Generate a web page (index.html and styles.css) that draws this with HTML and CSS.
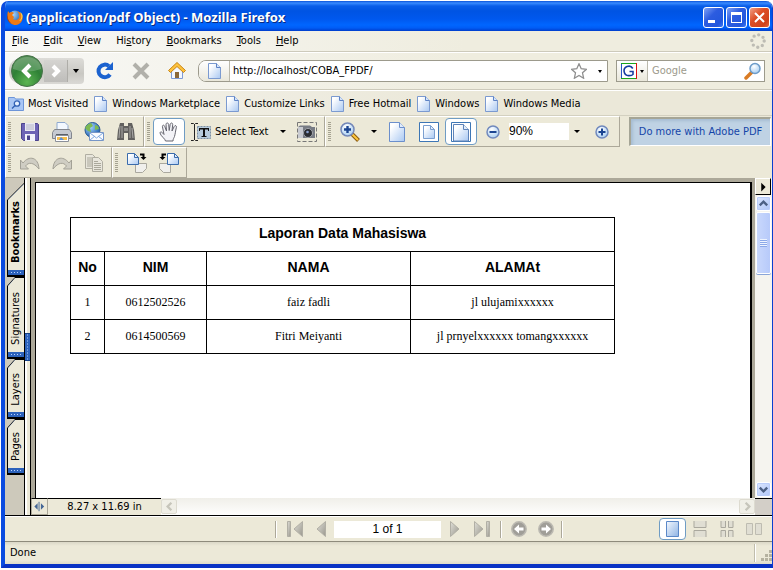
FILE: index.html
```html
<!DOCTYPE html>
<html lang="en">
<head>
<meta charset="utf-8">
<title>(application/pdf Object) - Mozilla Firefox</title>
<link rel="stylesheet" href="styles.css">
</head>
<body>
<svg class="defs" aria-hidden="true">
  <defs>
    <linearGradient id="paper" x1="0" y1="0" x2="1" y2="1"><stop offset=".2" stop-color="#fff"/><stop offset="1" stop-color="#a9c8f2"/></linearGradient>
    <linearGradient id="sky" x1="0" y1="0" x2="1" y2="1"><stop offset="0" stop-color="#f4f8fe"/><stop offset="1" stop-color="#8fb4e4"/></linearGradient>
    <linearGradient id="ash" x1="0" y1="0" x2="1" y2="1"><stop offset="0" stop-color="#e0dfd8"/><stop offset="1" stop-color="#99978d"/></linearGradient>
    <radialGradient id="green" cx=".5" cy=".85" r=".8"><stop offset="0" stop-color="#5cb552"/><stop offset=".6" stop-color="#2f8136"/><stop offset="1" stop-color="#4d8b50"/></radialGradient>
    <radialGradient id="globe" cx=".35" cy=".3" r=".8"><stop offset="0" stop-color="#a9d8ff"/><stop offset="1" stop-color="#0b4fa5"/></radialGradient>
    <radialGradient id="lens" cx=".4" cy=".3" r=".8"><stop offset="0" stop-color="#fff"/><stop offset="1" stop-color="#9fc9f0"/></radialGradient>
    <symbol id="page" viewBox="0 0 16 16"><path d="M2.500.5h8l4 4v11h-12z" fill="url(#paper)" stroke="#7b9ad0"/><path d="M10.500.5v4h4" fill="#d5e4fa" stroke="#5d82c4"/></symbol>
    <symbol id="bigpage" viewBox="0 0 20 20"><path d="M2.500.5h10l5 5v14h-15z" fill="url(#paper)" stroke="#6b8fcc"/><path d="M12.500.5v5h5" fill="#e2edfb" stroke="#6b8fcc"/></symbol>
  </defs>
</svg>
<div class="window">
  <header class="titlebar">
    <svg class="i16" viewBox="0 0 16 16"><circle cx="8" cy="8" r="6.500" fill="url(#globe)"/><path d="M1 2l1.500 2C4 2.500 6 3 7 4L5 6l2 2-1 2c2 2 5 1 6-1 1-3-1-6-2-7 4 1 6 4 5.500 8-1 4-4 6-8 6C2 15.500-1 9 1 2z" fill="#ee7a14"/><path d="M13 3c2 3 2 7-1 9 2 0 3-2 3.500-4C16 6 15 4 13 3z" fill="#ffd64a"/><path d="M1 3C0 8 1 12 5 15c-3-1-5-4-5-7z" fill="#a33a10"/></svg>
    <h1>(application/pdf Object) - Mozilla Firefox</h1>
    <button class="cap" aria-label="Minimize"><svg viewBox="0 0 17 17"><path d="M3 11h7v3H3z" fill="#fff"/></svg></button>
    <button class="cap" aria-label="Maximize"><svg viewBox="0 0 17 17"><path d="M3 3h11v11H3zM4 6v7h9V6z" fill="#fff" fill-rule="evenodd"/></svg></button>
    <button class="cap close" aria-label="Close"><svg viewBox="0 0 17 17"><path d="M4 4l9 9M13 4l-9 9" stroke="#fff" stroke-width="2"/></svg></button>
  </header>
  <nav class="menubar">
    <a href="#"><u>F</u>ile</a><a href="#"><u>E</u>dit</a><a href="#"><u>V</u>iew</a><a href="#">Hi<u>s</u>tory</a><a href="#"><u>B</u>ookmarks</a><a href="#"><u>T</u>ools</a><a href="#"><u>H</u>elp</a>
    <svg class="throbber" viewBox="0 0 16 16"><circle cx="8" cy="8" r="6.200" fill="none" stroke="#bdbcb4" stroke-width="3.400" stroke-dasharray="0 4.870" stroke-linecap="round"/></svg>
  </nav>
  <div class="navbar">
    <div class="history">
      <button class="back" aria-label="Back"><svg viewBox="0 0 34 34"><circle cx="17" cy="17" r="15.500" fill="url(#green)" stroke="#47724a"/><path d="M3 15a14 12 0 0128 0q-14 5-28 0" fill="#fff" opacity=".2"/><path d="M20 11l-6 6 6 6" fill="none" stroke="#fff" stroke-width="4"/></svg></button>
      <button class="fwd" aria-label="Forward"><svg viewBox="0 0 24 22"><path d="M9 6l5 5-5 5" fill="none" stroke="#fff" stroke-width="4"/></svg></button>
      <button class="drop" aria-label="Recent pages"><i class="caret"></i></button>
    </div>
    <button class="tool" aria-label="Reload"><svg class="i20" viewBox="0 0 20 20"><path d="M15 13.500A6.300 6.300 0 1114 5.200" fill="none" stroke="#1b62cf" stroke-width="4"/><path d="M18 1v8h-8z" fill="#1b62cf"/></svg></button>
    <button class="tool" aria-label="Stop"><svg class="i20" viewBox="0 0 20 20"><path d="M3 3l14 14M17 3L3 17" stroke="#b1b0aa" stroke-width="4"/></svg></button>
    <button class="tool" aria-label="Home"><svg class="i20" viewBox="0 0 20 20"><path d="M4.500 9v8.500h11V9L10 4z" fill="#f3f7ff" stroke="#7e9bd6"/><path d="M8 11h4v6H8z" fill="#8a6738"/><path d="M10 1.500l8.500 8-2 2L10 5.500l-6.500 6-2-2z" fill="#fdc23c" stroke="#c98515"/></svg></button>
    <div class="url">
      <span class="favicon"><svg class="i16"><use href="#page"/></svg></span>
      <input type="text" aria-label="Location" value="http://localhost/COBA_FPDF/">
      <button class="star" aria-label="Bookmark this page"><svg class="i16" viewBox="0 0 16 16"><path d="M8 .8l2.200 4.900 5.200.6-3.900 3.500 1.100 5.400L8 12.500l-4.600 2.700 1.100-5.400L.6 6.300l5.200-.6z" fill="#fff" stroke="#8f8f8f" stroke-width="1.300"/></svg></button>
      <button class="past" aria-label="Show history"><i class="caret tiny"></i></button>
    </div>
    <div class="search">
      <button class="engine" aria-label="Search engine"><svg class="i16" viewBox="0 0 16 16"><path d="M0 0h16v16H0z" fill="#fff"/><path d="M.5 16V0" stroke="#2855c5"/><path d="M0 .5h16" stroke="#1aa51a"/><path d="M15.500 0v16" stroke="#d11"/><path d="M0 15.500h15" stroke="#1aa51a"/><path d="M11.800 5.500A4.700 4.700 0 108 12.600c2 0 3.600-.6 4-1.200V8.500H8.500" fill="none" stroke="#173da0" stroke-width="1.600"/></svg><i class="caret tiny"></i></button>
      <input type="text" aria-label="Search" placeholder="Google">
      <button aria-label="Search"><svg class="i18" viewBox="0 0 18 18"><path d="M2 16l6-6" stroke="#d97b24" stroke-width="3.500" stroke-linecap="round"/><circle cx="11" cy="6.500" r="5" fill="url(#lens)" stroke="#6d9cc9" stroke-width="1.500"/></svg></button>
    </div>
  </div>
  <nav class="bookmarks">
    <a href="#"><svg class="i16" viewBox="0 0 16 16"><path d="M.5 1.500h6l1 1.500h8v11.500H.5z" fill="#a9c6f5" stroke="#6d95d8"/><circle cx="9" cy="7.500" r="2.700" fill="#e6f0ff" stroke="#3261b5" stroke-width="1.300"/><path d="M7 9.500l-3 3" stroke="#3261b5" stroke-width="1.500"/></svg>Most Visited</a>
    <a href="#"><svg class="i16"><use href="#page"/></svg>Windows Marketplace</a>
    <a href="#"><svg class="i16"><use href="#page"/></svg>Customize Links</a>
    <a href="#"><svg class="i16"><use href="#page"/></svg>Free Hotmail</a>
    <a href="#"><svg class="i16"><use href="#page"/></svg>Windows</a>
    <a href="#"><svg class="i16"><use href="#page"/></svg>Windows Media</a>
  </nav>

  <div class="acrobat">
    <div class="toolrow">
      <div class="group">
        <i class="grip"></i>
        <button class="tool" aria-label="Save"><svg class="i20" viewBox="0 0 20 20"><path d="M1.500 1.500h16l1 1v16h-15l-2-2z" fill="#6d63b5" stroke="#4c448d"/><path d="M5 1h10v8H5z" fill="#e9e9f2"/><path d="M6 3h8M6 5h8M6 7h8" stroke="#b4b4c8"/><path d="M5 12h10v7H5z" fill="#f3f3fb"/><path d="M7 13.500h3V18H7z" fill="#4c448d"/></svg></button>
        <button class="tool" aria-label="Print"><svg class="i20" viewBox="0 0 20 20"><path d="M5 9V.5h8l3 3V9z" fill="#f3f8ff" stroke="#8fa9cf"/><path d="M2.500 7.500h15l2 3v6H.5v-6z" fill="#c6cad1" stroke="#82868e"/><path d="M4 12h12v3H4z" fill="#5b6068"/><path d="M3.500 13.500h13v6h-13z" fill="#fff" stroke="#8b9099"/><path d="M5 15h10v3H5z" fill="#f5be4e"/><path d="M9 15l3 3H7z" fill="#5a90d8"/></svg></button>
        <button class="tool" aria-label="E-mail"><svg class="i20" viewBox="0 0 20 20"><circle cx="8.500" cy="8" r="7.500" fill="url(#globe)" stroke="#2b5b91"/><path d="M3 3l4-2 2 3-3 2 1 4-3-1-3-3zM11 3l3 1 1 3-4 1z" fill="#7dba52"/><path d="M5.500 10.500h14v8h-14z" fill="#fafcff" stroke="#7796c7"/><path d="M6 11l6.500 5L19 11M6 18l5-4M19 18l-5-4" fill="none" stroke="#7fa8df"/></svg></button>
        <button class="tool" aria-label="Search"><svg class="i20" viewBox="0 0 20 20"><path d="M4 1h4v3h4V1h4l2 7 1 10h-7v-7H8v7H1L2 8z" fill="#62615f"/><path d="M4 4L3 16M6 4v12M14 4v12M16 6l1 10" stroke="#aaa9a7"/><path d="M8 6h4v3H8z" fill="#8c8b88"/></svg></button>
      </div>
      <div class="group">
        <i class="grip"></i>
        <button class="tool on" aria-label="Hand tool"><svg class="i20" viewBox="0 0 20 20"><path d="M6.500 19c0-2-5-5-5.500-8 0-1.500 2-1.500 3 .5l1 1L3.500 5c-.5-2 1.500-2.500 2.200-.7L7.500 9 7 2.500c0-2 2.500-2 2.700 0L10.200 8.500 11.200 2.300c.5-2 2.700-1.500 2.500.4L13 9l2.200-4.500c.8-1.700 2.600-.9 2.200.8-1 4-1 6-1.900 9.200-.5 1.500-1.500 2.500-1.500 4.500z" fill="#f3f3f7" stroke="#65656f"/></svg></button>
        <button class="select"><svg viewBox="0 0 20 20"><path d="M0 1.500h2.500l1 1 1-1H7M3.500 2v16M0 18.500h2.500l1-1 1 1H7" fill="none" stroke="#222"/><path d="M6.500 4.500h13v12h-13z" fill="#b7cbdc" stroke="#7b8fa3" stroke-dasharray="2 1"/><path d="M8.500 9V6.500h9V9" fill="none" stroke="#111"/><path d="M8 6h10v1.500H8zM12 6h2v9h-2zM10.500 14h5v1h-5z" fill="#111"/></svg>Select Text</button>
        <button class="arrow" aria-label="Selection tools"><i class="caret small"></i></button>
        <button class="snap" aria-label="Snapshot"><svg class="i20" viewBox="0 0 20 20"><path d="M.5.500h19v19H.5z" fill="none" stroke="#777" stroke-dasharray="4 2"/><path d="M1 5l2-1.500h10L15 5h3v11H1z" fill="#777b84"/><path d="M1 5h5v11H1z" fill="#c8cad0"/><circle cx="11" cy="11" r="4.500" fill="#2b2d33" stroke="#a4a7ae"/><circle cx="10.500" cy="10" r="1.300" fill="#8ca2d0"/></svg></button>
      </div>
      <div class="group">
        <i class="grip"></i>
        <button class="tool" aria-label="Zoom in tool"><svg class="i20" viewBox="0 0 20 20"><path d="M12 12l6.500 6.500" stroke="#8b5b10" stroke-width="4"/><path d="M12 12l6 6" stroke="#ffc83d" stroke-width="2"/><circle cx="7.500" cy="7.500" r="6.500" fill="url(#lens)" stroke="#7488b8" stroke-width="1.500"/><path d="M7.500 4v7M4 7.500h7" stroke="#1b4592" stroke-width="2.400"/></svg></button>
        <button class="arrow zoomarrow" aria-label="Zoom tools"><i class="caret small"></i></button>
        <button class="tool" aria-label="Actual size"><svg class="i20"><use href="#bigpage"/></svg></button>
        <button class="tool" aria-label="Fit page"><svg class="i20" viewBox="0 0 20 20"><path d="M.5.500h19v19H.5z" fill="#fff" stroke="#3d76b5"/><path d="M4.500 3.500h7l4 4v9h-11z" fill="url(#paper)" stroke="#7b9fd0"/><path d="M11.500 3.500v4h4" fill="none" stroke="#7b9fd0"/></svg></button>
        <button class="tool on" aria-label="Fit width"><svg class="i20" viewBox="0 0 20 20"><path d="M.5.500h19v19H.5z" fill="#fff" stroke="#3d76b5"/><path d="M2.500 19V2.500h10l5 5V19z" fill="url(#paper)" stroke="#5e83b9"/><path d="M12.500 2.500v5h5" fill="#e2edfb" stroke="#5e83b9"/></svg></button>
        <button class="tool" aria-label="Zoom out"><svg class="i14" viewBox="0 0 14 14"><circle cx="7" cy="7" r="6" fill="url(#lens)" stroke="#7189bd" stroke-width="1.500"/><path d="M3.500 7h7" stroke="#1b4592" stroke-width="2"/></svg></button>
        <select aria-label="Zoom"><option>90%</option></select>
        <i class="caret small zc"></i>
        <button class="tool" aria-label="Zoom in"><svg class="i14" viewBox="0 0 14 14"><circle cx="7" cy="7" r="6" fill="url(#lens)" stroke="#7189bd" stroke-width="1.500"/><path d="M3.500 7h7M7 3.500v7" stroke="#1b4592" stroke-width="2"/></svg></button>
      </div>
      <a class="promo" href="#">Do more with Adobe PDF</a>
    </div>
    <div class="toolrow">
      <div class="group">
        <i class="grip"></i>
        <button class="tool" aria-label="Undo"><svg class="i20" viewBox="0 0 20 20"><path d="M.5 7v9h8l-3-3c3-4 8-4 13.500 3C18.500 4 9 2 3 10z" fill="#cfcdc3" stroke="#a3a196"/></svg></button>
        <button class="tool" aria-label="Redo"><svg class="i20" viewBox="0 0 20 20"><path d="M19.500 7v9h-8l3-3C11.500 9 6.500 9 1 16 1.500 4 11 2 17 10z" fill="#cfcdc3" stroke="#a3a196"/></svg></button>
        <button class="tool" aria-label="Copy"><svg class="i20" viewBox="0 0 20 20"><path d="M1.500 1.500h7l3 3v11h-10z" fill="#e8e6dc" stroke="#b0aea2"/><path d="M3 5h5M3 7h5M3 9h5M3 11h5M3 13h5" stroke="#aaa89b"/><path d="M8.500 4.500h6l4 4v10h-10z" fill="#e8e6dc" stroke="#b0aea2"/><path d="M10 8.500h4M10 10.500h7M10 12.500h7M10 14.500h7M10 16.500h7" stroke="#aaa89b"/></svg></button>
      </div>
      <div class="group">
        <i class="grip"></i>
        <button class="tool" aria-label="Rotate clockwise"><svg class="i20" viewBox="0 0 20 20"><path d="M8.500 10.500h11v5l-4 4h-7z" fill="#f0efec" stroke="#aaa89f"/><path d="M.5.500h7l4 4v7H.5z" fill="url(#paper)" stroke="#3b6cac"/><path d="M7.500.5v4h4" fill="none" stroke="#3b6cac"/><path d="M13 1.500h3.500V5" fill="none" stroke="#000" stroke-width="2"/><path d="M13.500 4h6l-3 3z"/></svg></button>
        <button class="tool" aria-label="Rotate counterclockwise"><svg class="i20" viewBox="0 0 20 20"><path d="M.5 10.500h11v9h-7l-4-4z" fill="#f0efec" stroke="#aaa89f"/><path d="M8.500.500h7l4 4v7h-11z" fill="url(#paper)" stroke="#3b6cac"/><path d="M15.500.5v4h4" fill="none" stroke="#3b6cac"/><path d="M7 1.500H3.500V5" fill="none" stroke="#000" stroke-width="2"/><path d="M.5 4h6l-3 3z"/></svg></button>
      </div>
    </div>
  </div>

  <div class="viewer">
    <div class="tabs">
      <button class="tab t1"><span>Bookmarks</span></button>
      <button class="tab t2"><span>Signatures</span></button>
      <button class="tab t3"><span>Layers</span></button>
      <button class="tab t4"><span>Pages</span></button>
    </div>
    <div class="splitter"><i></i></div>
    <div class="doc">
      <div class="desk">
        <main class="sheet">
          <table>
            <colgroup><col class="c1"><col class="c2"><col class="c3"><col class="c3"></colgroup>
            <thead>
              <tr><th colspan="4">Laporan Data Mahasiswa</th></tr>
              <tr><th>No</th><th>NIM</th><th>NAMA</th><th>ALAMAt</th></tr>
            </thead>
            <tbody>
              <tr><td>1</td><td>0612502526</td><td>faiz fadli</td><td>jl ulujamixxxxxx</td></tr>
              <tr><td>2</td><td>0614500569</td><td>Fitri Meiyanti</td><td>jl prnyelxxxxxx tomangxxxxxx</td></tr>
            </tbody>
          </table>
        </main>
      </div>
      <div class="vscroll">
        <button class="play" aria-label="Options"><svg viewBox="0 0 16 16"><path d="M6 3l5 5-5 5z"/></svg></button>
        <button class="sb" aria-label="Scroll up"><svg viewBox="0 0 14 14"><path d="M3 9l4-4 4 4" fill="none" stroke="#4d6185" stroke-width="2.500"/></svg></button>
        <div class="thumb"><i></i></div>
        <button class="sb end" aria-label="Scroll down"><svg viewBox="0 0 14 14"><path d="M3 5l4 4 4-4" fill="none" stroke="#4d6185" stroke-width="2.500"/></svg></button>
      </div>
      <div class="hscroll">
        <button class="split" aria-label="Toggle panel"><svg viewBox="0 0 16 16"><path d="M7.500 3v10" stroke="#446695"/><path d="M6 4.500v7L2.500 8zM9.500 4.500v7L13 8z" fill="#446695"/></svg></button>
        <span class="size">8.27 x 11.69 in</span>
        <button class="sbo" aria-label="Scroll left"><svg viewBox="0 0 14 14"><path d="M9 3L5 7l4 4" fill="none" stroke="#c6c5bb" stroke-width="2.500"/></svg></button>
        <div class="track"></div>
        <button class="sbo" aria-label="Scroll right"><svg viewBox="0 0 14 14"><path d="M5 3l4 4-4 4" fill="none" stroke="#c6c5bb" stroke-width="2.500"/></svg></button>
      </div>
      <div class="corner"></div>
    </div>
  </div>

  <div class="pager">
    <i class="sep"></i>
    <button class="nav" aria-label="First page"><svg viewBox="0 0 16 16"><path d="M.5.500h3v15h-3z" fill="url(#ash)" stroke="#b1afa5"/><path d="M15.500.500v15L7 8z" fill="url(#ash)" stroke="#b1afa5"/></svg></button>
    <button class="nav" aria-label="Previous page"><svg viewBox="0 0 16 16"><path d="M12.500.500v15L4 8z" fill="url(#ash)" stroke="#b1afa5"/></svg></button>
    <input type="text" aria-label="Page" value="1 of 1">
    <button class="nav" aria-label="Next page"><svg viewBox="0 0 16 16"><path d="M4.500.500v15L13 8z" fill="url(#ash)" stroke="#b1afa5"/></svg></button>
    <button class="nav" aria-label="Last page"><svg viewBox="0 0 16 16"><path d="M12.500.500h3v15h-3z" fill="url(#ash)" stroke="#b1afa5"/><path d="M.5.500v15L9 8z" fill="url(#ash)" stroke="#b1afa5"/></svg></button>
    <i class="sep"></i>
    <button class="view" aria-label="Previous view"><svg viewBox="0 0 16 16"><circle cx="8" cy="8" r="7.200" fill="#a09e98" stroke="#bbb9b1" stroke-width="1.500"/><path d="M3 8l5-4.500v3h4.500v3H8v3z" fill="#fff"/></svg></button>
    <button class="view" aria-label="Next view"><svg viewBox="0 0 16 16"><circle cx="8" cy="8" r="7.200" fill="#a09e98" stroke="#bbb9b1" stroke-width="1.500"/><path d="M13 8L8 3.500v3H3.500v3H8v3z" fill="#fff"/></svg></button>
    <i class="sep"></i>
    <div class="modes">
      <button class="view on" aria-label="Single page"><svg viewBox="0 0 16 16"><path d="M1.500.5h12v15h-12z" fill="url(#sky)" stroke="#5b88c8"/></svg></button>
      <button class="view" aria-label="Continuous"><svg viewBox="0 0 16 16"><path d="M2 0v6.500h12V0M2 16V9.500h12V16" fill="#e0ded3" stroke="#aaa89e"/></svg></button>
      <button class="view" aria-label="Continuous facing"><svg viewBox="0 0 16 16"><path d="M2 0v6.500h4.500V0M9.500 0v6.500H14V0M2 16V9.500h4.500V16M9.500 16V9.500H14V16" fill="#e0ded3" stroke="#aaa89e"/></svg></button>
      <button class="view" aria-label="Facing"><svg viewBox="0 0 16 16"><path d="M.5 2.500h6v11h-6zM9.500 2.500h6v11h-6z" fill="#e0ded3" stroke="#bebcb1"/></svg></button>
    </div>
  </div>
  <footer class="status"><span>Done</span><i></i><svg viewBox="0 0 16 16"><path d="M13 3h3v3h-3zM9 7h3v3H9zM13 7h3v3h-3zM5 11h3v3H5zM9 11h3v3H9zM13 11h3v3h-3z" fill="#b5b2a0"/></svg></footer>
</div>
</body>
</html>
```
FILE: styles.css
```css
* { box-sizing: border-box; }
body {
  margin: 0;
  padding: 1px 0 2px 1px;
  background: #fff;
  font: 11px/14px "DejaVu Sans Condensed", "Noto Sans", sans-serif;
  color: #000;
}
.defs { position: absolute; width: 0; height: 0; }
button { margin: 0; padding: 0; border: 0; background: none; font: inherit; color: inherit; display: flex; align-items: center; justify-content: center; flex: none; }
input, select { font: inherit; color: inherit; border: 0; margin: 0; padding: 0; border-radius: 0; min-width: 0; outline: 0; }
a { color: inherit; text-decoration: none; }
svg { display: block; flex: none; }
.i14 { width: 14px; height: 14px; }
.i16 { width: 16px; height: 16px; }
.i18 { width: 18px; height: 18px; }
.i20 { width: 20px; height: 20px; }

.window {
  display: flex;
  flex-direction: column;
  height: calc(100vh - 3px);
  min-height: 480px;
  background: #ece9d8;
  border-left: 4px solid #0a4be0;
  border-right: 1px solid #0a3fd0;
  border-bottom: 4px solid #0831c4;
  border-radius: 7px 7px 0 0;
  overflow: hidden;
}
.titlebar {
  display: flex;
  align-items: center;
  gap: 2px;
  height: 30px;
  flex: none;
  margin-left: -4px;
  padding: 2px 2px 0 6px;
  background: linear-gradient(#0a52d8 0, #3a8cff 2px, #0a5ee8 5px, #0054e3 10px, #0058ee 18px, #0066ff 24px, #005cf5 27px, #003dcc 30px);
}
.titlebar h1 {
  flex: 1;
  margin: 0 0 0 1px;
  color: #fff;
  font: bold 13px/20px "Noto Sans", sans-serif;
  text-shadow: 1px 1px 0 #0a2a80;
  white-space: nowrap;
}
.cap {
  width: 21px;
  height: 21px;
  border: 1px solid #fff;
  border-radius: 3px;
  background: linear-gradient(135deg, #7fa2f5, #2c5ce0 40%, #2357dd 80%, #3c78f5);
}
.cap svg { width: 17px; height: 17px; }
.cap.close { background: linear-gradient(135deg, #f0a087, #dd4e26 40%, #d1421c 80%, #e5673d); }

.menubar {
  display: flex;
  align-items: center;
  gap: 15px;
  height: 21px;
  flex: none;
  padding: 0 6px 0 7px;
  border-bottom: 1px solid #cdcabb;
  background: linear-gradient(90deg, #f8f8f6, #efeddf 60%);
}
.throbber { width: 16px; height: 16px; margin-left: auto; }
.navbar {
  display: flex;
  align-items: center;
  height: 38px;
  flex: none;
  padding: 0 7px 0 4px;
  border-top: 1px solid #fff;
  border-bottom: 1px solid #cdcabb;
  background: linear-gradient(90deg, #f8f8f6, #efeddf 60%);
}
.history {
  display: flex;
  align-items: center;
  width: 75px;
  height: 26px;
  margin-right: 3px;
  border-radius: 12px 4px 4px 12px;
  background: linear-gradient(#dddcd8, #c9c8c3 60%, #dad9d5);
}
.back { width: 34px; height: 34px; margin-left: 1px; }
.back svg { width: 34px; height: 34px; }
.fwd { width: 24px; height: 22px; border-right: 1px solid #aeada8; background: linear-gradient(#d5d4d1, #bebdba); }
.fwd svg { width: 24px; height: 22px; }
.drop { width: 16px; height: 24px; }
.caret { flex: none; width: 0; height: 0; border: 3px solid transparent; border-top: 4px solid #000; border-bottom: 0; }
.caret.small { border-width: 3px 3px 0; }
.caret.tiny { border-width: 3px 2px 0; }
.tool { width: 32px; height: 27px; }
.navbar .tool { width: 36px; }
.url, .search { display: flex; align-items: center; height: 22px; border: 1px solid #9c9a8c; background: #fff; }
.url { flex: 1; margin-left: 3px; border-radius: 8px 0 0 8px; overflow: hidden; }
.favicon { display: flex; align-items: center; justify-content: center; width: 31px; height: 20px; border-right: 1px solid #bbb9ac; background: linear-gradient(#fff, #e9e7da); }
.url input { flex: 1; padding-left: 3px; }
.star { width: 28px; }
.past { width: 14px; }
.search { width: 149px; margin-left: 8px; padding-right: 2px; }
.engine { width: 31px; height: 20px; gap: 3px; border-right: 1px solid #bbb9ac; background: linear-gradient(#fff, #e9e7da); }
.search input { flex: 1; padding-left: 4px; }
.search input::placeholder { color: #9c9a8c; opacity: 1; }
.bookmarks {
  display: flex;
  align-items: center;
  gap: 4px;
  height: 26px;
  flex: none;
  padding: 1px 4px 0 3px;
  border-top: 1px solid #fff;
  border-bottom: 1px solid #d3d0c0;
  background: linear-gradient(90deg, #f4f3ec, #ebe8d9 60%);
  white-space: nowrap;
}
.bookmarks a { display: flex; align-items: center; gap: 4px; }

.acrobat { flex: none; background: #ece9d8; }
.toolrow { display: flex; height: 31px; }
.group {
  display: flex;
  align-items: center;
  padding: 0 1px 0 2px;
  border: 1px solid #aca899;
  border-top-color: #fff;
  border-left-color: #fff;
}
.grip { flex: none; width: 3px; height: 20px; margin-right: 3px; background: repeating-linear-gradient(#a5a291 0 1px, transparent 1px 2px); }
.tool.on, .view.on { border: 1px solid #6f9cc4; border-radius: 4px; background: #fff; }
.select { gap: 4px; margin-left: 6px; width: 80px; justify-content: flex-start; white-space: nowrap; }
.select svg { width: 20px; height: 20px; }
.arrow { width: 24px; height: 24px; }
.snap { width: 22px; margin: 0 5px 0 1px; }
.zoomarrow { width: 15px; }
.group select { width: 60px; height: 17px; appearance: none; background: #fff; font: 12px/17px "Liberation Sans", sans-serif; }
.zc { margin: 0 6px 0 5px; }
.promo {
  flex: 1;
  display: flex;
  align-items: center;
  justify-content: center;
  height: 29px;
  margin: 1px 1px 0 9px;
  border: 1px solid #fff;
  border-top: 2px solid #a5a596;
  border-left: 2px solid #a5a596;
  background: #bfd2e4;
  color: #1445a8;
  white-space: nowrap;
  box-shadow: inset 2px 2px 3px #a7bdd2;
}

.viewer { display: flex; flex: 1; min-height: 0; border-bottom: 1px solid #000; }
.tabs { width: 19px; padding: 5px 0 0 2px; background: #cdc9bb; }
.tab {
  position: relative;
  width: 17px;
  background: #000;
  clip-path: polygon(0 9px, 8px 0, 100% 0, 100% 100%, 0 100%);
}
.tab::before {
  content: "";
  position: absolute;
  inset: 1px 0 2px 1px;
  background: linear-gradient(#ece9d8 0 0) top / 100% calc(100% - 5px) no-repeat, #2c62bb;
  clip-path: polygon(0 8px, 7px 0, 100% 0, 100% 100%, 0 100%);
}
.tab::after { content: ""; position: absolute; left: 4px; bottom: 4px; width: 10px; height: 1px; background: repeating-linear-gradient(90deg, #b9d2ff 0 1px, transparent 1px 3px); }
.tab span { position: relative; writing-mode: vertical-rl; transform: rotate(180deg); }
.t1 { height: 94px; font-weight: bold; padding-top: 4px; clip-path: polygon(0 17px, 100% 0, 100% 100%, 0 100%); }
.t1::before { clip-path: polygon(0 16px, 100% 0, 100% 100%, 0 100%); }
.t2 { height: 82px; }
.t3 { height: 60px; }
.t4 { height: 56px; }
.splitter { display: flex; align-items: center; width: 7px; border: 1px solid #000; border-width: 0 1px; background: linear-gradient(90deg, #fff 2px, #ece9d8 2px); }
.splitter i { width: 5px; height: 28px; border: 1px solid #123f86; border-width: 1px 0; background: radial-gradient(circle, #b9d2ff 1px, #2c62bb 1px) center / 5px 3px; }
.doc { flex: 1; min-width: 0; display: grid; grid-template-columns: 1fr 17px; grid-template-rows: 1fr 17px; }
.desk { padding: 4px 3px 0 4px; background: #aca899; min-height: 0; overflow: hidden; }
.sheet { height: 100%; border: 1px solid #000; border-width: 1px 2px 0 1px; background: #fff; padding: 34px 0 0 34px; }
table { width: 545px; max-width: 100%; table-layout: fixed; border-collapse: collapse; text-align: center; }
.c1 { width: 34px; }
.c2 { width: 102px; }
.c3 { width: 204px; }
th, td { height: 34px; padding: 0; border: 1px solid #000; }
th { font: bold 14px/16px "Liberation Sans", sans-serif; padding-bottom: 4px; }
td { font: 12px/14px "Liberation Serif", serif; padding-bottom: 2px; }

.vscroll { display: flex; flex-direction: column; padding-bottom: 1px; background: #f5f4ef; }
.play { width: 16px; height: 17px; background: #ece9d8; border: 1px solid #fff; border-right-color: #000; border-bottom-color: #000; }
.play svg { width: 14px; height: 14px; }
.sb { width: 15px; height: 15px; margin: 1px 0 0 1px; border: 1px solid #fff; border-radius: 2px; background: linear-gradient(135deg, #dce7ff, #b0c6f8); box-shadow: inset 0 0 0 1px #bacdfa; }
.sb svg { width: 13px; height: 13px; }
.sb.end { margin-top: auto; }
.thumb { display: flex; align-items: center; justify-content: center; width: 15px; height: 62px; margin: 1px 0 0 1px; border: 1px solid #fff; border-radius: 2px; background: linear-gradient(90deg, #c9d8fc, #b7cafa); box-shadow: 0 1px 0 #8aa5d8; }
.thumb i { width: 7px; height: 8px; background: repeating-linear-gradient(#eef4ff 0 1px, #8ca9e8 1px 2px); }
.hscroll { display: flex; align-items: center; background: linear-gradient(#f0efe9, #fefefd); min-width: 0; }
.split { width: 17px; height: 17px; border: 1px solid #aca899; border-top-color: #000; background: #ece9d8; }
.split svg { width: 15px; height: 15px; }
.size { display: flex; align-items: center; justify-content: center; width: 113px; height: 17px; border-top: 1px solid #000; background: #ece9d8; white-space: nowrap; }
.track { flex: 1; }
.sbo { width: 16px; height: 15px; border: 1px solid #dddbd0; border-radius: 2px; background: #f0efe7; }
.sbo svg { width: 13px; height: 13px; }
.corner { border-top: 1px solid #000; background: #d3cfc8; }

.pager {
  display: flex;
  align-items: center;
  justify-content: flex-end;
  height: 26px;
  flex: none;
  padding-right: 5px;
  border-top: 1px solid #fff;
  border-bottom: 1px solid #8e8b7c;
}
.sep { flex: none; width: 2px; height: 17px; border-left: 1px solid #aca899; border-right: 1px solid #fff; }
.nav { width: 16px; height: 16px; margin: 0 10px 0 0; }
.nav svg, .view svg { width: 16px; height: 16px; }
.sep + .nav { margin-left: 10px; }
.nav + .nav { margin-right: 5px; }
.pager input + .nav { margin: 0 12px 0 5px; }
.pager input + .nav + .nav { margin-right: 10px; }
.pager input { width: 107px; height: 17px; text-align: center; background: #fff; font: 12px/17px "Liberation Sans", sans-serif; }
.view { width: 27px; height: 22px; }
.sep + .view { margin-left: 3px; }
.view + .sep { margin-left: 2px; }
.modes { display: flex; margin-left: 96px; }

.status {
  display: flex;
  align-items: center;
  height: 22px;
  flex: none;
  padding-left: 5px;
  background: linear-gradient(#dbd8c8, #ece9d8 4px, #ece9d8 18px, #dedbca);
}
.status i { width: 2px; height: 18px; margin-left: auto; border-left: 1px solid #c0bdac; border-right: 1px solid #fff; }
.status svg { width: 16px; height: 16px; margin-top: 4px; }
```
